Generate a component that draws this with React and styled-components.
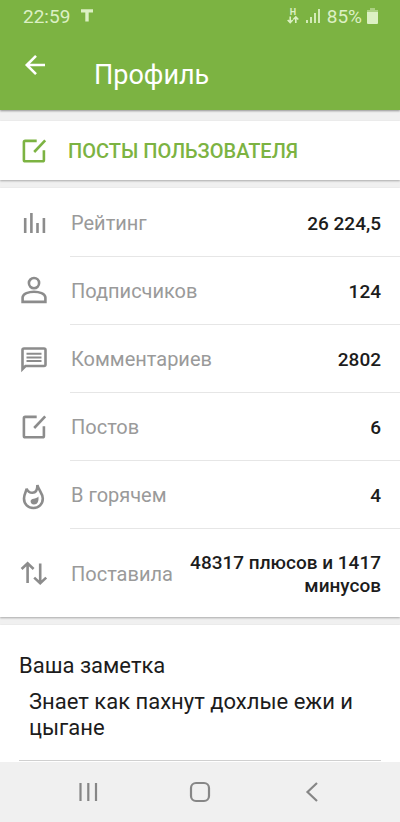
import React, { useState } from 'react'
import styled, { createGlobalStyle } from 'styled-components'

const GlobalStyle = createGlobalStyle`
  :root {
    --green: #7cb342;
    --grey: #8c8c8c;
    --page: #f0f0f0;
  }
  * {
    box-sizing: border-box;
  }
  body {
    margin: 0;
    background-color: var(--page);
    color: #1c1c1c;
    font-family: Roboto, "Noto Sans", sans-serif;
  }
  button, textarea {
    font-family: inherit;
  }
`;

const StyledScreen = styled.div`
  display: flex;
  flex-direction: column;
  min-height: 100vh;
`;

const StyledHeader = styled.header`
  background-color: var(--green);
  color: #fff;
  padding-bottom: 16px;
  box-shadow: 0 1px 2px rgba(0, 0, 0, 0.4);
`;

const StyledStatusBar = styled.div`
  display: flex;
  align-items: center;
  justify-content: space-between;
  height: 32px;
  padding: 0 22px 0 23px;
  color: #dcf0c4;
  font-size: 19px;
`;

const StyledStatusGroup = styled.div`
  display: flex;
  align-items: center;
  gap: ${(props) => props.$gap}px;
`;

const StyledToolbar = styled.div`
  display: flex;
  align-items: flex-end;
  gap: 46px;
  height: 62px;
  padding: 0 20px;
`;

const StyledBackButton = styled.button`
  all: unset;
  display: flex;
  align-self: flex-start;
  padding-top: 19px;
  cursor: pointer;
`;

const StyledTitle = styled.h1`
  margin: 0;
  font-size: 27px;
  line-height: 38px;
  font-weight: 400;
`;

const StyledMain = styled.main`
  display: flex;
  flex: 1;
  flex-direction: column;
  gap: 8px;
  padding-top: 11px;
`;

const StyledCard = styled.section`
  background-color: #fff;
  box-shadow: 0 1px 2px rgba(0, 0, 0, 0.3);
`;

const StyledPostsLink = styled.a`
  display: flex;
  align-items: center;
  gap: 20px;
  height: 59px;
  padding: 0 20px;
  color: var(--green);
  font-size: 20px;
  font-weight: 500;
  text-decoration: none;
  text-transform: uppercase;
`;

const StyledStats = styled.dl`
  margin: 0;
  padding-top: 1px;
`;

const StyledRow = styled.div`
  display: flex;
  align-items: center;
  gap: 22px;
  padding-left: 20px;
  color: var(--grey);
`;

const StyledRowContent = styled.div`
  display: flex;
  flex: 1;
  align-items: center;
  justify-content: space-between;
  gap: 8px;
  min-height: ${(props) => (props.$last ? 88 : 68)}px;
  padding-top: 1px;
  padding-right: 19px;
  padding-left: 1px;
  border-bottom: ${(props) => (props.$last ? 'none' : '1px solid #e6e6e6')};
`;

const StyledLabel = styled.dt`
  color: #9a9a9a;
  font-size: 20px;
`;

const StyledValue = styled.dd`
  margin: 0;
  color: #1c1c1c;
  font-size: 19px;
  line-height: 23px;
  font-weight: 500;
  text-align: right;
`;

const StyledNoteCard = styled(StyledCard)`
  flex: 1;
  padding: 28px 19px 1px;
`;

const StyledNoteLabel = styled.label`
  display: block;
  font-size: 22px;
  line-height: 26px;
`;

const StyledNote = styled.textarea`
  display: block;
  width: 100%;
  height: 82px;
  padding: 10px;
  border: none;
  border-bottom: 1px solid #d0d0d0;
  outline: none;
  resize: none;
  background: none;
  color: inherit;
  font-size: 22px;
  line-height: 26px;
  overflow: hidden;
`;

const StyledNavBar = styled.nav`
  position: relative;
  display: flex;
  align-items: center;
  justify-content: space-around;
  height: 60px;
  padding: 0 32px;
  background-color: var(--page);
`;

const StyledNavButton = styled.button`
  all: unset;
  display: flex;
  justify-content: center;
  flex: 1;
  color: #868686;
  cursor: pointer;
`;

const StyledIcon = styled.svg`
  flex: none;
  fill: none;
  stroke: currentColor;
  stroke-width: ${(props) => props.$stroke || 2.6};
  overflow: visible;
`;

const Icon = ({ children, size = 28, stroke }) => (
  <StyledIcon width={size} height={size} viewBox={`0 0 ${size} ${size}`} $stroke={stroke} aria-hidden="true">
    {children}
  </StyledIcon>
);

const EditIcon = () => (
  <Icon>
    <path d="M16.7 3.9H5.2Q3.9 3.9 3.9 5.2V23Q3.9 24.3 5.2 24.3H22.6Q23.9 24.3 23.9 23V13.2" />
    <path d="M14.2 15L25.2 3.4" />
  </Icon>
);

const ChartIcon = () => (
  <Icon>
    <path d="M5.2 9V24M11.4 4V24M17.5 14V24M23.9 9V24" />
  </Icon>
);

const PersonIcon = () => (
  <Icon>
    <circle cx="14" cy="6.1" r="5.1" />
    <path d="M2.6 24.9V20.5C2.6 16.5 9 14.7 14 14.7S25.4 16.5 25.4 20.5V24.9Z" />
  </Icon>
);

const CommentIcon = () => (
  <Icon>
    <path d="M2.5 24V5Q2.5 3.5 4 3.5H24Q25.5 3.5 25.5 5V19.5Q25.5 21 24 21H5.5Z" />
    <path d="M6.5 8.7H21.5M6.5 12.4H21.5M6.5 16.1H21.5" strokeWidth="2" />
  </Icon>
);

const FireIcon = () => (
  <Icon>
    <path d="M6.6 7.6C6.4 10.6 4 12.8 4 17.6C4 23.2 8 27 13.4 27S22.8 23.2 22.8 17.6C22.8 12.2 18.6 9.6 17.4 4C17.4 8 16.2 11.8 12.4 11.8C9.6 11.8 7.6 10.2 6.6 7.6Z" />
    <path d="M18.4 15.4C19 20 17.6 23.4 14 23.4C11.8 23.4 10.4 22 10.6 20C10.9 17 15.8 18.4 18.4 15.4Z" fill="currentColor" stroke="none" />
  </Icon>
);

const VotesIcon = () => (
  <Icon>
    <path d="M7.6 24V4.6M1.6 10L7.6 4.4L13.6 10" />
    <path d="M20.2 4.4V24M14.2 18.6L20.2 24.2L26.2 18.6" />
  </Icon>
);

const stats = [
  { label: 'Рейтинг', value: '26 224,5', icon: ChartIcon },
  { label: 'Подписчиков', value: '124', icon: PersonIcon },
  { label: 'Комментариев', value: '2802', icon: CommentIcon },
  { label: 'Постов', value: '6', icon: EditIcon },
  { label: 'В горячем', value: '4', icon: FireIcon },
  { label: 'Поставила', value: '48317 плюсов и 1417 минусов', icon: VotesIcon },
];

function StatusBar() {
  return (
    <StyledStatusBar>
      <StyledStatusGroup $gap={11}>
        <span>22:59</span>
        <svg width="12" height="14" viewBox="0 0 12 14" fill="none" stroke="currentColor" strokeWidth="3.4" aria-hidden="true">
          <path d="M0 1.9H12M6 1.9V12.4" />
        </svg>
      </StyledStatusGroup>
      <StyledStatusGroup $gap={7}>
        <svg width="12" height="18" viewBox="0 0 12 18" fill="none" stroke="currentColor" strokeWidth="1.6" aria-hidden="true">
          <text x="6" y="8" textAnchor="middle" fontSize="9" fontWeight="700" fill="currentColor" stroke="none">H</text>
          <path d="M3.2 9.5V15.5M0.7 13L3.2 15.5L5.7 13M8.8 16V10M6.3 12.5L8.8 10L11.3 12.5" />
        </svg>
        <svg width="14" height="16" viewBox="0 0 14 16" fill="none" stroke="currentColor" strokeWidth="1.8" aria-hidden="true">
          <path d="M1 12V15M5 9V15M9 5V15M13 1V15" />
        </svg>
        <StyledStatusGroup $gap={5}>
          <span>85%</span>
          <svg width="11" height="16" viewBox="0 0 11 16" fill="currentColor" aria-hidden="true">
            <path d="M3 0H8V2H11V4H0V2H3Z" opacity="0.5" />
            <path d="M0 4H11V15Q11 16 10 16H1Q0 16 0 15Z" />
          </svg>
        </StyledStatusGroup>
      </StyledStatusGroup>
    </StyledStatusBar>
  );
}

function NavBar() {
  return (
    <StyledNavBar>
      <StyledNavButton type="button" aria-label="Недавние">
        <Icon size={24} stroke={2.2}>
          <path d="M4.5 3V21M12.3 3V21M20 3V21" />
        </Icon>
      </StyledNavButton>
      <StyledNavButton type="button" aria-label="Домой">
        <Icon size={24} stroke={2.2}>
          <rect x="3" y="3" width="18" height="18" rx="5" />
        </Icon>
      </StyledNavButton>
      <StyledNavButton type="button" aria-label="Назад">
        <Icon size={24} stroke={2.2}>
          <path d="M17 3L7.5 12L17 21" />
        </Icon>
      </StyledNavButton>
    </StyledNavBar>
  );
}

function App() {
  const [note, setNote] = useState('Знает как пахнут дохлые ежи и цыгане');

  return (
    <StyledScreen>
      <GlobalStyle />
      <StyledHeader>
        <StatusBar />
        <StyledToolbar>
          <StyledBackButton type="button" aria-label="Назад">
            <Icon stroke={2.6}>
              <path d="M25 14H7M16 4.8L6.8 14L16 23.2" />
            </Icon>
          </StyledBackButton>
          <StyledTitle>Профиль</StyledTitle>
        </StyledToolbar>
      </StyledHeader>
      <StyledMain>
        <StyledCard>
          <StyledPostsLink href="#posts">
            <EditIcon />
            Посты пользователя
          </StyledPostsLink>
        </StyledCard>
        <StyledCard>
          <StyledStats>
            {stats.map(({ label, value, icon: StatIcon }, index) => (
              <StyledRow key={label}>
                <StatIcon />
                <StyledRowContent $last={index === stats.length - 1}>
                  <StyledLabel>{label}</StyledLabel>
                  <StyledValue>{value}</StyledValue>
                </StyledRowContent>
              </StyledRow>
            ))}
          </StyledStats>
        </StyledCard>
        <StyledNoteCard>
          <StyledNoteLabel htmlFor="note">Ваша заметка</StyledNoteLabel>
          <StyledNote id="note" value={note} onChange={(e) => setNote(e.target.value)} />
        </StyledNoteCard>
      </StyledMain>
      <NavBar />
    </StyledScreen>
  );
}

export default App
